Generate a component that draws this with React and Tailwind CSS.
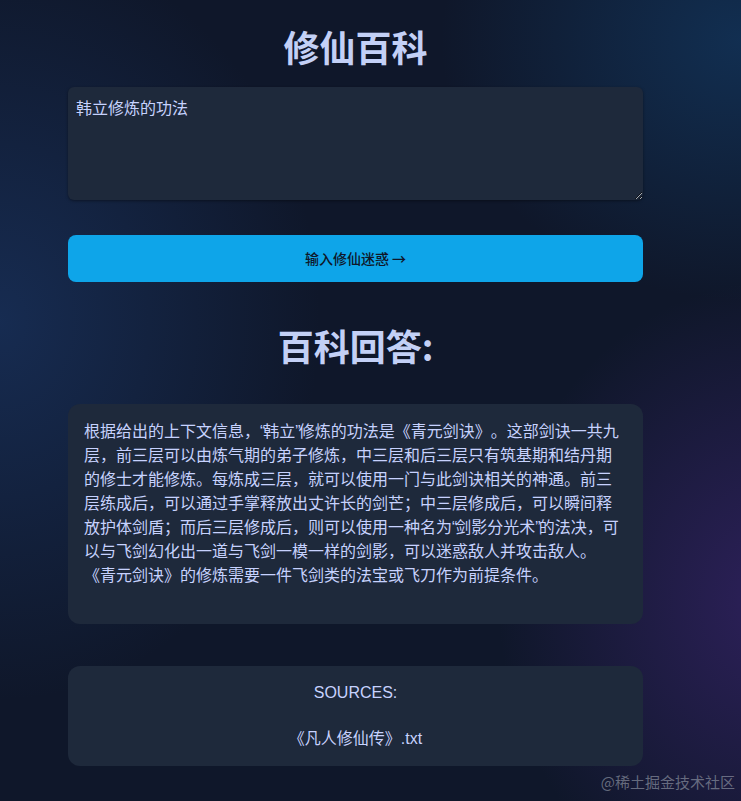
import React from "react";

function Q({ c }) {
  return <span className="tracking-[-2px]">{c}</span>;
}

const cjk = "font-['Noto_Sans_CJK_SC','Noto_Sans',sans-serif]";

export default function App() {
  return (
    <div className="relative min-h-screen w-full overflow-hidden bg-[#0f172a] bg-[radial-gradient(ellipse_320px_380px_at_0%_40%,rgba(30,64,120,0.5),transparent),radial-gradient(ellipse_300px_260px_at_100%_5%,rgba(20,70,120,0.5),transparent),radial-gradient(ellipse_280px_320px_at_105%_75%,rgba(70,40,130,0.55),transparent)] font-['Liberation_Sans','Noto_Sans_CJK_SC',sans-serif] [text-spacing-trim:space-all]">
      <div className="ml-[68px] flex w-[575px] flex-col pt-[24px] pb-[35px]">
        <h1 className={`${cjk} text-center text-[36px] font-bold leading-[44px] text-[#c3d0f6]`}>修仙百科</h1>
        <textarea
          className={`${cjk} mt-[19px] h-[113px] w-full resize-y rounded-md bg-[#1e293b] px-2 py-2 text-[16px] leading-6 text-[#c7d2fe] shadow-[0_1px_3px_rgba(0,0,0,0.4)] outline-none`}
          defaultValue="韩立修炼的功法"
        />
        <button className={`${cjk} mt-[35px] h-[47px] w-full rounded-lg bg-[#0ea5e9] text-[14px] font-medium text-[#0f172a]`}>
          输入修仙迷惑 →
        </button>
        <h2 className={`${cjk} mt-[41px] text-center text-[36px] font-bold leading-[44px] text-[#c3d0f6]`}>百科回答:</h2>
        <div className="mt-[37px] rounded-xl bg-[#1e293b] px-4 pt-4 pb-[36px] text-[16px] leading-6 text-[#c7d2fe]">
          根据给出的上下文信息，<Q c="“" />韩立<Q c="”" />修炼的功法是《青元剑诀》。这部剑诀一共九层，前三层可以由炼气期的弟子修炼，中三层和后三层只有筑基期和结丹期的修士才能修炼。每炼成三层，就可以使用一门与此剑诀相关的神通。前三层练成后，可以通过手掌释放出丈许长的剑芒；中三层修成后，可以瞬间释放护体剑盾；而后三层修成后，则可以使用一种名为<Q c="“" />剑影分光术<Q c="”" />的法决，可以与飞剑幻化出一道与飞剑一模一样的剑影，可以迷惑敌人并攻击敌人。《青元剑诀》的修炼需要一件飞剑类的法宝或飞刀作为前提条件。
        </div>
        <div className="mt-[42px] flex h-[100px] flex-col items-center rounded-xl bg-[#1e293b] pt-[15px] text-[16px] leading-6 text-[#c7d2fe]">
          <div>SOURCES:</div>
          <div className="mt-[22px]">《凡人修仙传》.txt</div>
        </div>
      </div>
      <div className={`${cjk} absolute bottom-[8px] right-[6px] text-[15px] text-[#9ca3af]/60`}>@稀土掘金技术社区</div>
    </div>
  );
}
